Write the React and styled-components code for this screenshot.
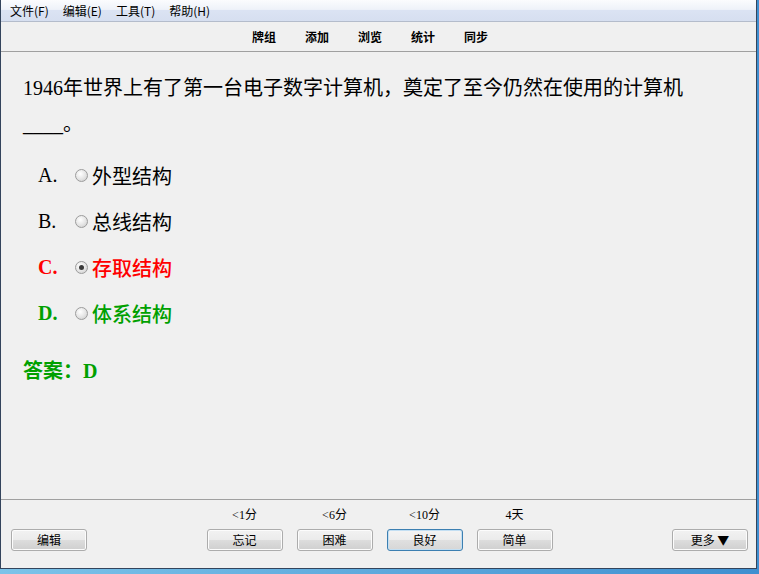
import styled, { createGlobalStyle } from "styled-components";

const GlobalStyle = createGlobalStyle`
  html, body {
    margin: 0;
    padding: 0;
    height: 100%;
  }
  body {
    background: linear-gradient(to right, #7cc3e9, #3f8fd0);
    font-family: "Noto Sans CJK SC", "Liberation Sans", sans-serif;
    overflow: hidden;
  }
`

const Window = styled.div`
  box-sizing: border-box;
  width: 757px;
  height: 569px;
  background: #f0f0f0;
  border: 1px solid #33445c;
  border-top: none;
  display: flex;
  flex-direction: column;
`

const MenuBar = styled.div`
  height: 21px;
  flex-shrink: 0;
  border-bottom: 1px solid #b4bccb;
  background: linear-gradient(#fbfcfe 0%, #eef2f9 45%, #dbe3f3 50%, #d6dff0 100%);
  display: flex;
  align-items: center;
  padding-left: 2px;
`

const MenuItem = styled.span`
  font-size: 12px;
  line-height: 14px;
  padding: 0 7px;
  color: #000;
`

const Toolbar = styled.div`
  height: 29px;
  flex-shrink: 0;
  border-bottom: 1px solid #a0a0a0;
  display: flex;
  align-items: center;
  justify-content: center;
  gap: 29px;
  padding-right: 17px;
`

const Tab = styled.span`
  font-size: 12px;
  font-weight: bold;
  line-height: 14px;
  color: #000;
`

const Content = styled.div`
  flex: 1;
  padding: 18px 22px 0 22px;
  font-family: "Liberation Serif", "Noto Sans CJK SC", serif;
  font-size: 20px;
  color: #000;
`

const Question = styled.div`
  line-height: 36px;
  width: 700px;
`

const Options = styled.div`
  margin-top: 10px;
  padding-left: 15px;
`

const Option = styled.label`
  display: flex;
  align-items: center;
  height: 46px;
  color: ${p => p.$color || "#000"};
  font-weight: ${p => (p.$bold ? 500 : "normal")};
`

const Letter = styled.span`
  width: 37px;
  font-weight: ${p => (p.$bold ? "bold" : "normal")};
`

const Radio = styled.span`
  box-sizing: border-box;
  width: 13px;
  height: 13px;
  border-radius: 50%;
  border: 1px solid #9c9c9c;
  background: radial-gradient(circle at 40% 35%, #ffffff 0%, #e4e4e4 55%, #c8c8c8 100%);
  margin-right: 4px;
  display: flex;
  align-items: center;
  justify-content: center;
  flex-shrink: 0;

  &::after {
    content: "";
    display: ${p => (p.$checked ? "block" : "none")};
    width: 5px;
    height: 5px;
    border-radius: 50%;
    background: #3a3a3a;
  }
`

const Answer = styled.div`
  margin-top: 17px;
  line-height: 36px;
  font-weight: bold;
  color: #00a000;
`

const Footer = styled.div`
  box-sizing: border-box;
  height: 69px;
  flex-shrink: 0;
  border-top: 1px solid #a0a0a0;
  display: grid;
  grid-template-columns: 1fr auto 1fr;
  align-items: end;
  padding: 0 8px 17px 10px;
`

const Side = styled.div`
  justify-self: ${p => p.$end ? "end" : "start"};
`

const Group = styled.div`
  display: flex;
  gap: 14px;
`

const Column = styled.div`
  display: flex;
  flex-direction: column;
  align-items: center;
`

const Due = styled.span`
  font-family: "Liberation Serif", "Noto Sans CJK SC", serif;
  font-size: 12px;
  line-height: 14px;
  margin-bottom: 7px;
  color: #000;
`

const Button = styled.button`
  box-sizing: border-box;
  width: 76px;
  height: 22px;
  padding: 0;
  font-family: "Noto Sans CJK SC", "Liberation Sans", sans-serif;
  font-size: 12px;
  line-height: 14px;
  color: #000;
  border-radius: 3px;
  border: 1px solid #acacac;
  background: linear-gradient(#f2f2f2 0%, #ebebeb 50%, #dddddd 51%, #cfcfcf 100%);
  box-shadow: inset 0 0 0 1px #fcfcfc;
`

const FocusButton = styled(Button)`
  border-color: #3c7fb1;
  background: linear-gradient(#f4f4f4 0%, #ececec 50%, #e0e0e0 51%, #d6d6d6 100%);
  box-shadow: inset 0 0 0 1px #c3dff3;
`

const answers = [
  { due: "<1分", label: "忘记" },
  { due: "<6分", label: "困难" },
  { due: "<10分", label: "良好", focused: true },
  { due: "4天", label: "简单" },
];

const options = [
  { letter: "A.", text: "外型结构" },
  { letter: "B.", text: "总线结构" },
  { letter: "C.", text: "存取结构", color: "#ff0000", bold: true, checked: true },
  { letter: "D.", text: "体系结构", color: "#00a000", bold: true },
];

export default function App() {
  return (
    <>
      <GlobalStyle />
      <Window>
        <MenuBar>
          <MenuItem>文件(F)</MenuItem>
          <MenuItem>编辑(E)</MenuItem>
          <MenuItem>工具(T)</MenuItem>
          <MenuItem>帮助(H)</MenuItem>
        </MenuBar>
        <Toolbar>
          <Tab>牌组</Tab>
          <Tab>添加</Tab>
          <Tab>浏览</Tab>
          <Tab>统计</Tab>
          <Tab>同步</Tab>
        </Toolbar>
        <Content>
          <Question>
            1946年世界上有了第一台电子数字计算机，奠定了至今仍然在使用的计算机 ____。
          </Question>
          <Options>
            {options.map(o => (
              <Option key={o.letter} $color={o.color} $bold={o.bold}>
                <Letter $bold={o.bold}>{o.letter}</Letter>
                <Radio $checked={o.checked} />
                {o.text}
              </Option>
            ))}
          </Options>
          <Answer>答案：D</Answer>
        </Content>
        <Footer>
          <Side>
            <Button>编辑</Button>
          </Side>
          <Group>
            {answers.map(a => (
              <Column key={a.label}>
                <Due>{a.due}</Due>
                {a.focused ? <FocusButton>{a.label}</FocusButton> : <Button>{a.label}</Button>}
              </Column>
            ))}
          </Group>
          <Side $end>
            <Button>更多 ▼</Button>
          </Side>
        </Footer>
      </Window>
    </>
  );
}
